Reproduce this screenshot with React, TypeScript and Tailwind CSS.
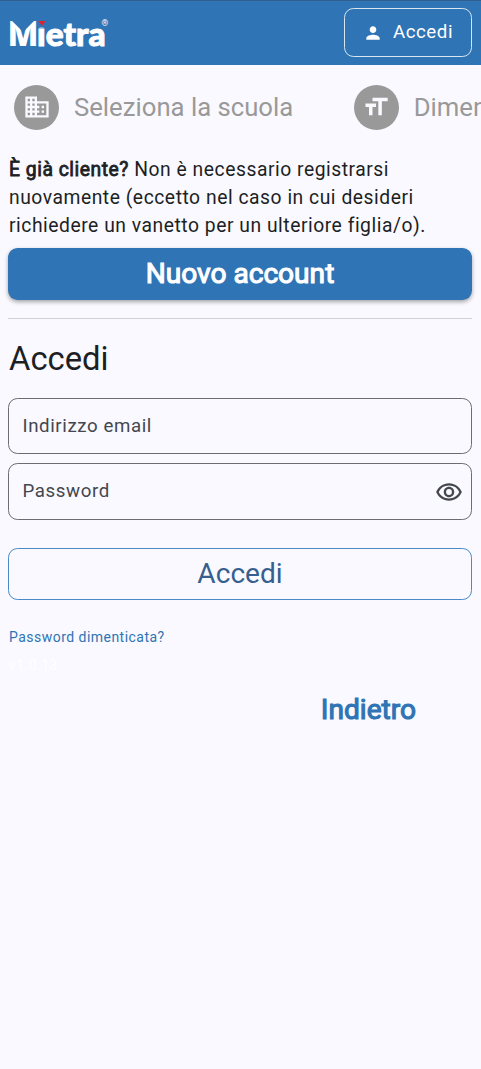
import React from "react";
import {
  MdPerson,
  MdBusiness,
  MdFormatSize,
  MdOutlineRemoveRedEye,
} from "react-icons/md";

function Logo() {
  return (
    <svg width="104" height="34" viewBox="0 0 104 34" className="block overflow-visible" fill="#fff">
      <text y="31">
        <tspan x="-1.2" fontFamily="Open Sans, sans-serif" fontWeight="800" fontSize="35" textLength="30.5" lengthAdjust="spacingAndGlyphs">M</tspan>
        <tspan x="28" fontFamily="Lato, sans-serif" fontWeight="900" fontSize="33" textLength="68.5" lengthAdjust="spacingAndGlyphs" stroke="#fff" strokeWidth="1">ietra</tspan>
        <tspan x="92.6" y="10.5" fontFamily="Roboto, sans-serif" fontSize="8.5">®</tspan>
      </text>
      <path d="M2.4 5.2H25.8L14.1 17z" fill="#2f74b5" />
      <rect x="28" y="3" width="10" height="9.6" fill="#2f74b5" />
      <path d="M29.2 6h7.6l-3.8 4.8z" fill="#e3202f" />
    </svg>
  );
}

function Step({ icon, label }: { icon: React.ReactNode; label: string }) {
  return (
    <div className="flex shrink-0 items-center gap-[15px]">
      <span className="flex size-[45px] items-center justify-center rounded-full bg-[#999] text-[28px] text-[#f9f9ff]">
        {icon}
      </span>
      <span className="text-[25.7px] leading-[33px] whitespace-nowrap text-[#999]">{label}</span>
    </div>
  );
}

export default function App() {
  return (
    <div className="flex h-[1069px] w-[481px] flex-col overflow-hidden bg-[#f9f9ff] font-['Roboto',sans-serif] text-[#1d1f24]">
      <header className="flex h-[65px] shrink-0 items-start justify-between border-t border-[#315f91] bg-[#2f74b5] pt-[7px] pr-[9px] pl-[9px]">
        <div className="pt-[7px]">
          <Logo />
        </div>
        <button className="flex h-[49px] w-[128px] items-center justify-center gap-2.5 rounded-[9.5px] border border-[#d9e5f2] text-[18.7px] tracking-[0.55px] text-white">
          <MdPerson className="size-[20px]" />
          Accedi
        </button>
      </header>

      <div className="flex h-[84px] shrink-0 items-center gap-[60.5px] overflow-hidden pl-3.5">
        <Step icon={<MdBusiness />} label="Seleziona la scuola" />
        <Step icon={<MdFormatSize />} label="Dimensioni" />
      </div>

      <main className="flex flex-col pt-[7px] pr-[9px] pl-[8px]">
        <p className="pl-px text-[19.3px] leading-[28px] tracking-[0.53px]">
          <span className="[-webkit-text-stroke:0.8px_#1d1f24]">È già cliente?</span> Non è necessario registrarsi
          <br />
          nuovamente (eccetto nel caso in cui desideri
          <br />
          richiedere un vanetto per un ulteriore figlia/o).
        </p>
        <button className="mt-[8px] h-[52px] rounded-[9.5px] bg-[#2f74b5] text-[28.1px] leading-[36px] text-white shadow-[0_2px_4px_rgba(0,0,0,0.35)] [-webkit-text-stroke:1.1px_#fff]">
          Nuovo account
        </button>
        <div className="mt-[17.5px] h-[1.5px] bg-[#cfd0d8]" />
        <h1 className="mt-[19px] pl-px text-[32.8px] leading-[42px]">Accedi</h1>
        <div className="mt-[18px] flex h-[56px] items-center rounded-[9.5px] border border-[#6b6d74] px-[13.5px] text-[18.7px] tracking-[0.59px] text-[#44474e]">
          Indirizzo email
        </div>
        <div className="mt-[9px] flex h-[57px] items-center justify-between rounded-[9.5px] border border-[#6b6d74] pr-[8.5px] pl-[13.5px] text-[18.7px] tracking-[0.59px] text-[#44474e]">
          Password
          <MdOutlineRemoveRedEye className="size-[28px]" />
        </div>
        <button className="mt-[28px] h-[52px] rounded-[9.5px] border border-[#4a8ac6] text-[28.1px] leading-[36px] text-[#365f90]">
          Accedi
        </button>
        <a className="mt-[27px] pl-px text-[14px] leading-[20px] tracking-[0.47px] text-[#2f74b5]">Password dimenticata?</a>
        <span className="mt-[8px] pl-px text-[14px] leading-[20px] tracking-[0.47px] text-white">v1.0.13</span>
        <button className="mt-[17px] mr-[56px] self-end text-[28.1px] leading-[36px] text-[#2f74b5] [-webkit-text-stroke:1.1px_#2f74b5]">
          Indietro
        </button>
      </main>
    </div>
  );
}
